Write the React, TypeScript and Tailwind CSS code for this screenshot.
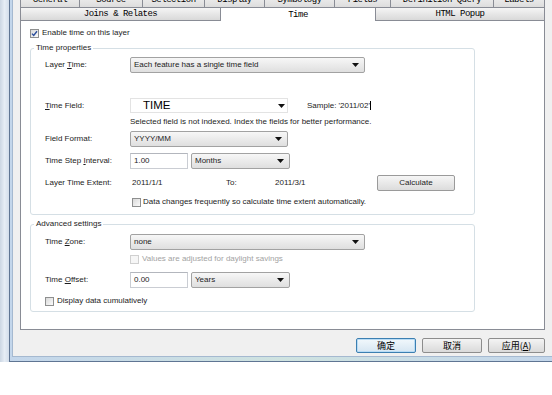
import React from "react";

const Arrow = () => (
  <svg width="7" height="4" viewBox="0 0 7 4" className="shrink-0">
    <path d="M0 0h7L3.5 4z" fill="#111" />
  </svg>
);

const Check = ({ checked, disabled }: { checked?: boolean; disabled?: boolean }) => (
  <span
    className={
      disabled
        ? "w-[9px] h-[9px] shrink-0 border border-[#d0d0d0] bg-[#f6f6f6]"
        : "w-[9px] h-[9px] shrink-0 flex items-center justify-center border border-[#8e8f8f] bg-gradient-to-br from-[#d9d9d9] to-[#fbfbfb]"
    }
  >
    {checked && (
      <svg width="7" height="7" viewBox="0 0 7 7">
        <path d="M1 3.6L2.7 5.5L6 1.2" stroke="#2a4d9c" strokeWidth="1.4" fill="none" />
      </svg>
    )}
  </span>
);

const Select = ({ className, value }: { className: string; value: string }) => (
  <div
    className={`${className} h-[16px] shrink-0 flex items-center justify-between pl-[3px] pr-[5px] border border-[#a2a2a2] rounded-[2px] bg-gradient-to-b from-[#f7f7f7] to-[#dfdfdf]`}
  >
    <span>{value}</span>
    <Arrow />
  </div>
);

const Input = ({ value }: { value: string }) => (
  <div className="w-[58px] h-[16px] shrink-0 flex items-center pl-[3px] border border-[#cacdd3] border-t-[#b3b6bd] bg-white">
    {value}
  </div>
);

const Label = ({ children }: { children: React.ReactNode }) => (
  <div className="w-[85px] shrink-0">{children}</div>
);

const Group = ({ title, className, children }: { title: string; className: string; children: React.ReactNode }) => (
  <div className={`relative w-[445px] border border-[#d5dfe5] rounded-[3px] pl-[14px] ${className}`}>
    <span className="absolute -top-[6px] left-[3px] bg-white px-[2px] leading-[10px]">{title}</span>
    {children}
  </div>
);

const topTabs: [string, string][] = [
  ["General", "w-[60px]"],
  ["Source", "w-[63px]"],
  ["Selection", "w-[62px]"],
  ["Display", "w-[60px]"],
  ["Symbology", "w-[70px]"],
  ["Fields", "w-[56px]"],
  ["Definition Query", "w-[103px]"],
  ["Labels", "w-[51px]"],
];

const tabFont = "font-['Liberation_Mono',monospace] text-[9px] tracking-[-0.5px] text-black";

export default function App() {
  return (
    <div className="w-[552px] h-[395px] bg-white overflow-hidden font-['Liberation_Sans',Arial,sans-serif] text-[8px] text-[#1c1c1c]">
      <div className="flex h-[362px]">
        <div className="w-[9px] bg-gradient-to-r from-[#cbd6e3] via-[#e6edf5] to-[#d3deeb]" />
        <div className="flex-1 flex flex-col border-l border-b border-[#5f7593] bg-gradient-to-r from-[#c3d6eb] via-[#cfe3e0] to-[#c3d6eb] pl-[2px] pb-[4px]">
          <div className="flex-1 flex flex-col bg-[#f0f0f0] border-l border-b border-[#a5b9d0] pl-[7px] pr-[7px]">
            {/* back tab row */}
            <div className={`flex -mt-[7px] h-[14px] ${tabFont}`}>
              {topTabs.map(([t, w], i) => (
                <div
                  key={t}
                  className={`${w} ${i === 0 ? "border-l" : ""} border-r border-[#898c95] bg-gradient-to-b from-[#f4f4f4] to-[#dddddd] flex items-center justify-center leading-none`}
                >
                  {t}
                </div>
              ))}
            </div>
            {/* front tab row */}
            <div className={`flex items-end h-[13px] ${tabFont}`}>
              <div className="w-[200px] h-[13px] border-l border-t border-[#898c95] bg-gradient-to-b from-[#f5f5f5] to-[#d9d9d9] flex items-center justify-center leading-none pt-[1px]">
                Joins &amp; Relates
              </div>
              <div className="relative z-10 w-[156px] h-[14px] -mb-[1px] border-x border-t border-[#898c95] bg-white flex justify-center leading-none pt-[3px]">
                Time
              </div>
              <div className="w-[169px] h-[13px] border-r border-t border-[#898c95] bg-gradient-to-b from-[#f5f5f5] to-[#d9d9d9] flex items-center justify-center leading-none pt-[1px]">
                HTML Popup
              </div>
            </div>

            {/* panel */}
            <div className="h-[310px] border border-[#898c95] bg-white pl-[9px] pt-[6px]">
              <div className="flex items-center gap-[3px] h-[12px]">
                <Check checked />
                <span>Enable time on this layer</span>
              </div>

              <Group title="Time properties" className="mt-[9px] pt-[8px] pb-[6px]">
                <div className="flex items-center h-[16px]">
                  <Label>
                    Layer <u>T</u>ime:
                  </Label>
                  <Select className="w-[235px]" value="Each feature has a single time field" />
                </div>
                <div className="flex items-center h-[15px] mt-[25px]">
                  <Label>
                    <u>T</u>ime Field:
                  </Label>
                  <div className="w-[158px] h-[15px] shrink-0 flex items-center justify-between pl-[12px] pr-[2px] border border-[#e3e3e3] bg-white">
                    <span className="text-[11.5px] leading-none text-black">TIME</span>
                    <Arrow />
                  </div>
                  <span className="ml-[19px]">Sample: '2011/02'</span>
                  <span className="w-[1px] h-[9px] bg-black" />
                </div>
                <div className="flex items-center h-[10px] mt-[4px] pl-[85px]">
                  Selected field is not indexed. Index the fields for better performance.
                </div>
                <div className="flex items-center h-[16px] mt-[4px]">
                  <Label>Field Format:</Label>
                  <Select className="w-[158px]" value="YYYY/MM" />
                </div>
                <div className="flex items-center h-[16px] mt-[6px]">
                  <Label>
                    Time Step <u>I</u>nterval:
                  </Label>
                  <Input value="1.00" />
                  <Select className="w-[99px] ml-[3px]" value="Months" />
                </div>
                <div className="flex items-center h-[16px] mt-[6px]">
                  <Label>Layer Time Extent:</Label>
                  <span className="w-[96px] pl-[2px]">2011/1/1</span>
                  <span className="w-[49px]">To:</span>
                  <span className="w-[102px]">2011/3/1</span>
                  <div className="w-[78px] h-[16px] flex items-center justify-center border border-[#9a9a9a] rounded-[2px] bg-gradient-to-b from-[#f6f6f6] to-[#dcdcdc]">
                    Calculate
                  </div>
                </div>
                <div className="flex items-center gap-[2px] h-[12px] mt-[5px] pl-[87px]">
                  <Check />
                  <span>Data changes frequently so calculate time extent automatically.</span>
                </div>
              </Group>

              <Group title="Advanced settings" className="mt-[9px] pt-[9px] pb-[4px]">
                <div className="flex items-center h-[16px]">
                  <Label>
                    Time <u>Z</u>one:
                  </Label>
                  <Select className="w-[235px]" value="none" />
                </div>
                <div className="flex items-center gap-[3px] h-[12px] mt-[3px] pl-[85px]">
                  <Check disabled />
                  <span className="text-[#a3a3a3]">Values are adjusted for daylight savings</span>
                </div>
                <div className="flex items-center h-[16px] mt-[7px]">
                  <Label>
                    Time <u>O</u>ffset:
                  </Label>
                  <Input value="0.00" />
                  <Select className="w-[99px] ml-[3px]" value="Years" />
                </div>
                <div className="flex items-center gap-[3px] h-[12px] mt-[7px]">
                  <Check />
                  <span>Display data cumulatively</span>
                </div>
              </Group>
            </div>

            {/* dialog buttons */}
            <div className="flex justify-end gap-[6px] pt-[8px] font-['Noto_Sans_CJK_SC',sans-serif] text-[9px] text-black">
              <div className="w-[60px] h-[15px] flex items-center justify-center border border-[#3c7fb1] rounded-[2px] bg-gradient-to-b from-[#f2f8fc] to-[#d6e6f2] shadow-[inset_0_0_0_1px_#b9dcf5] leading-none">
                确定
              </div>
              <div className="w-[60px] h-[15px] flex items-center justify-center border border-[#8d8d8d] rounded-[2px] bg-gradient-to-b from-[#f4f4f4] to-[#dadada] leading-none">
                取消
              </div>
              <div className="w-[57px] h-[15px] flex items-center justify-center border border-[#8d8d8d] rounded-[2px] bg-gradient-to-b from-[#f4f4f4] to-[#dadada] leading-none">
                应用(<u>A</u>)
              </div>
            </div>
          </div>
        </div>
      </div>
    </div>
  );
}
